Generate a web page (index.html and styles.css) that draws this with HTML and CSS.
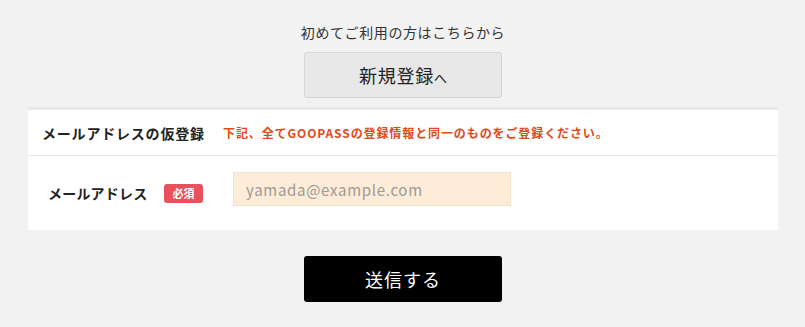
FILE: index.html
```html
<!DOCTYPE html>
<html lang="ja">
<head>
<meta charset="utf-8">
<link rel="stylesheet" href="styles.css">
</head>
<body>
<div class="page">
  <p class="intro">初めてご利用の方はこちらから</p>
  <div class="center"><button class="btn-register">新規登録<span class="arrow">へ</span></button></div>
  <div class="card">
    <div class="card-head">
      <span class="head-label">メールアドレスの仮登録</span>
      <span class="head-note">下記、全てGOOPASSの登録情報と同一のものをご登録ください。</span>
    </div>
    <div class="row">
      <span class="row-label">メールアドレス</span>
      <span class="badge">必須</span>
      <input class="input" type="text" placeholder="yamada@example.com">
    </div>
  </div>
  <div class="center"><button class="btn-submit">送信する</button></div>
</div>
</body>
</html>
```
FILE: styles.css
```css
html, body {
  margin: 0;
  padding: 0;
  background: #f2f2f2;
  font-family: "Noto Sans CJK JP", "Noto Sans", sans-serif;
  color: #222;
}
.page {
  padding: 21px 27px 0 28px;
}
.intro {
  margin: 0;
  text-align: center;
  font-size: 14px;
  line-height: 22px;
  letter-spacing: 0.6px;
  color: #333;
}
.center {
  display: flex;
  justify-content: center;
}
.btn-register {
  margin-top: 9px;
  width: 198px;
  height: 46px;
  background: #e8e8e8;
  border: 1px solid #d6d6d6;
  border-radius: 3px;
  font-family: inherit;
  font-size: 18px;
  letter-spacing: 0.8px;
  color: #222;
  padding: 0;
}
.arrow {
  font-size: 13px;
  letter-spacing: 0;
}
.card {
  margin-top: 9px;
  background: #fff;
  border-top: 3px solid #e6e8ea;
}
.card-head {
  display: flex;
  align-items: center;
  height: 45px;
  padding-left: 14px;
  border-bottom: 1px solid #e6e8ea;
}
.head-label {
  font-size: 14px;
  font-weight: bold;
  color: #222;
  letter-spacing: 0.8px;
  width: 181px;
}
.head-note {
  font-size: 12px;
  font-weight: bold;
  color: #e04a1d;
  letter-spacing: 0.9px;
}
.row {
  display: flex;
  align-items: center;
  height: 74px;
  padding-left: 20px;
}
.row-label {
  font-size: 14px;
  font-weight: bold;
  color: #222;
  letter-spacing: 0.2px;
  width: 116px;
}
.badge {
  background: #e8505b;
  color: #fff;
  font-size: 11px;
  font-weight: bold;
  border-radius: 3px;
  width: 39px;
  height: 19px;
  line-height: 19px;
  text-align: center;
  margin-right: 30px;
}
.input {
  box-sizing: border-box;
  width: 278px;
  height: 34px;
  margin-top: -8px;
  background: #fdecd7;
  border: 1px solid #f1e2cc;
  padding: 0 12px;
  font-family: inherit;
  font-size: 15px;
  letter-spacing: 0.7px;
  outline: none;
}
.input::placeholder {
  color: #a09a94;
}
.btn-submit {
  margin-top: 26px;
  width: 198px;
  height: 46px;
  background: #000;
  border: none;
  border-radius: 3px;
  color: #fff;
  font-family: inherit;
  font-size: 18px;
  letter-spacing: 1px;
  padding: 0;
}
```
